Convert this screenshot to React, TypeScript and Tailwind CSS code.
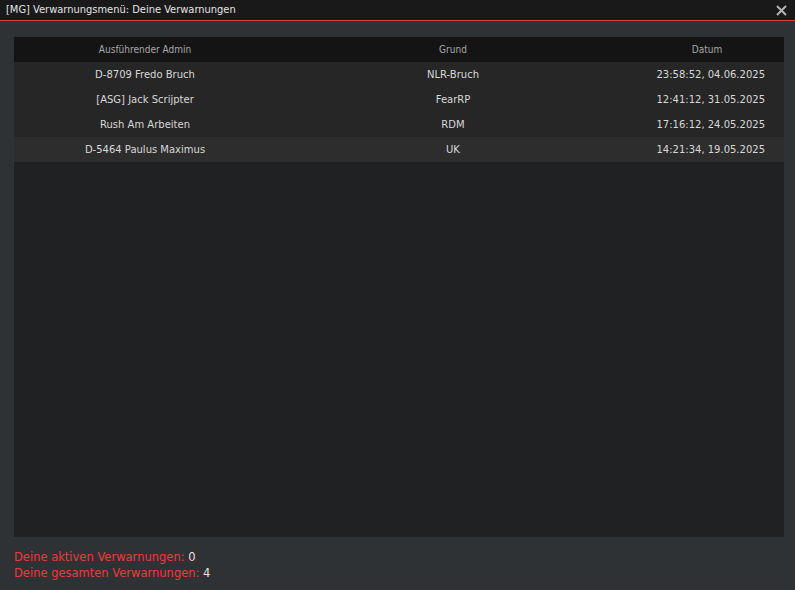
import React from 'react';

const rows = [
  { admin: 'D-8709 Fredo Bruch', grund: 'NLR-Bruch', datum: '23:58:52, 04.06.2025' },
  { admin: '[ASG] Jack Scrijpter', grund: 'FearRP', datum: '12:41:12, 31.05.2025' },
  { admin: 'Rush Am Arbeiten', grund: 'RDM', datum: '17:16:12, 24.05.2025' },
  { admin: 'D-5464 Paulus Maximus', grund: 'UK', datum: '14:21:34, 19.05.2025' },
];

export default function App() {
  return (
    <div className="w-[795px] h-[590px] flex flex-col bg-[#2f3234] font-['DejaVu_Sans',sans-serif] overflow-hidden">
      {/* Title bar */}
      <div className="h-[20px] shrink-0 flex items-center justify-between pl-[6px] pr-[8px] bg-[#191919]">
        <span className="text-[11px] text-[#e4e4e4] font-['DejaVu_Sans_Condensed','DejaVu_Sans',sans-serif] mt-[1px]">
          [MG] Verwarnungsmenü: Deine Verwarnungen
        </span>
        <svg width="11" height="11" viewBox="0 0 11 11" className="mt-[1px]">
          <path d="M1 1 L10 10 M10 1 L1 10" stroke="#b4b4b4" strokeWidth="2" />
        </svg>
      </div>
      <div className="h-px shrink-0 bg-[#d8403d]" />

      {/* Body */}
      <div className="flex-1 flex flex-col pl-[14px] pr-[11px] pt-[16px]">
        <div className="h-[500px] shrink-0 flex flex-col bg-[#1f2123]">
          <div className="h-[25px] grid grid-cols-[262px_354px_154px] items-center bg-[#141414] text-[10px] text-[#a8a8a8] font-['DejaVu_Sans_Condensed','DejaVu_Sans',sans-serif]">
            <span className="text-center">Ausführender Admin</span>
            <span className="text-center">Grund</span>
            <span className="text-center">Datum</span>
          </div>
          {rows.map((r, i) => (
            <div
              key={i}
              className={`h-[25px] grid grid-cols-[262px_354px_154px] items-center text-[10px] text-[#d8d8d8] ${
                i === 3 ? 'bg-[#2d2d2d]' : 'bg-[#262626]'
              }`}
            >
              <span className="text-center">{r.admin}</span>
              <span className="text-center">{r.grund}</span>
              <span className="text-right pr-[19px]">{r.datum}</span>
            </div>
          ))}
        </div>

        {/* Footer */}
        <div className="mt-[12px] flex flex-col text-[11.5px] leading-[16px]">
          <span className="text-[#ee3a3a]">
            Deine aktiven Verwarnungen: <span className="text-[#f2dede]">0</span>
          </span>
          <span className="text-[#ee3a3a]">
            Deine gesamten Verwarnungen: <span className="text-[#f2dede]">4</span>
          </span>
        </div>
      </div>
    </div>
  );
}
